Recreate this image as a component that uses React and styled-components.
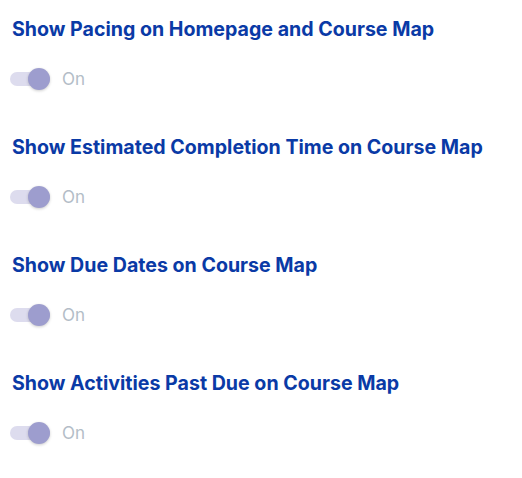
import React from "react";
import styled, { createGlobalStyle } from "styled-components";

const GlobalStyle = createGlobalStyle`
  body {
    margin: 0;
    background: #ffffff;
    font-family: Inter, "Noto Sans", sans-serif;
  }
`;

const Page = styled.div`
  padding: 17px 12px;
  display: flex;
  flex-direction: column;
  gap: 44px;
`;

const Setting = styled.div`
  display: flex;
  flex-direction: column;
  gap: 26px;
`;

const Title = styled.h3`
  margin: 0;
  font-size: 19.6px;
  line-height: 24px;
  font-weight: 700;
  color: #0a3aa6;
`;

const ToggleRow = styled.label`
  display: flex;
  align-items: center;
  gap: 12px;
  height: 24px;
  margin-left: -2px;
`;

const Track = styled.span`
  position: relative;
  display: inline-block;
  width: 40px;
  height: 14px;
  border-radius: 7px;
  background: ${({ on }) => (on ? "#dddcee" : "#e2e4ea")};
`;

const Thumb = styled.span`
  position: absolute;
  top: -4px;
  left: ${({ on }) => (on ? "18px" : "0")};
  width: 22px;
  height: 22px;
  border-radius: 50%;
  background: ${({ on }) => (on ? "#9d9dce" : "#f5f5f5")};
  box-shadow: 0 1px 3px rgba(0, 0, 0, 0.2);
`;

const StateText = styled.span`
  font-size: 17px;
  color: #b3bdc7;
`;

const settings = [
  "Show Pacing on Homepage and Course Map",
  "Show Estimated Completion Time on Course Map",
  "Show Due Dates on Course Map",
  "Show Activities Past Due on Course Map",
];

export default function App() {
  return (
    <>
      <GlobalStyle />
      <Page>
        {settings.map((label) => (
          <Setting key={label}>
            <Title>{label}</Title>
            <ToggleRow>
              <Track on>
                <Thumb on />
              </Track>
              <StateText>On</StateText>
            </ToggleRow>
          </Setting>
        ))}
      </Page>
    </>
  );
}
